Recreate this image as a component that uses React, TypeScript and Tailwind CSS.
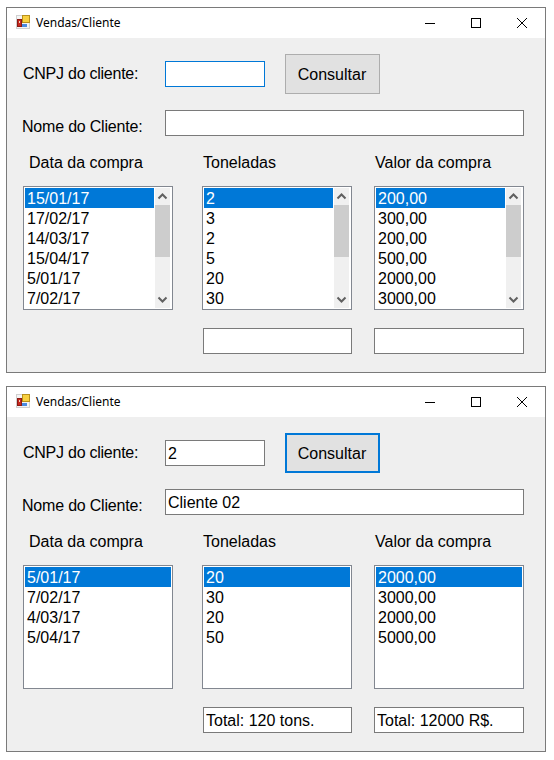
import React from "react";

const AppIcon = () => (
  <svg width="14" height="14" viewBox="0 0 14 14" className="shrink-0 mr-[1px] -translate-y-[1px]">
    <rect x="0" y="0" width="14" height="14" fill="#d0d0d0" />
    <rect x="1" y="1" width="12" height="12" fill="#f4f4f4" />
    <rect x="6.5" y="0.5" width="7" height="7" fill="#f8d040" stroke="#b8901c" />
    <rect x="1.5" y="4.5" width="4" height="7" fill="#c8281e" stroke="#8a1a14" />
    <rect x="3" y="6" width="1" height="2" fill="#f0d0c0" />
    <rect x="6" y="9" width="5" height="3" fill="#4a8ae0" />
  </svg>
);

const TitleBar = () => (
  <div className="h-[30px] bg-white flex items-center pl-[9px] shrink-0">
    <AppIcon />
    <span className="ml-[5px] flex-1 text-[12px] text-black font-['Noto_Sans',sans-serif]">Vendas/Cliente</span>
    <div className="w-[46px] h-[30px] flex items-center justify-center">
      <svg width="10" height="10" viewBox="0 0 10 10"><path d="M0 5.5H10" stroke="#000" strokeWidth="1" /></svg>
    </div>
    <div className="w-[46px] h-[30px] flex items-center justify-center">
      <svg width="10" height="10" viewBox="0 0 10 10"><rect x="0.5" y="0.5" width="9" height="9" fill="none" stroke="#000" /></svg>
    </div>
    <div className="w-[46px] h-[30px] flex items-center justify-center">
      <svg width="10" height="10" viewBox="0 0 10 10"><path d="M0 0L10 10M10 0L0 10" stroke="#000" strokeWidth="1" /></svg>
    </div>
  </div>
);

const Arrow = ({ down }: { down?: boolean }) => (
  <svg width="15" height="17" viewBox="0 0 15 17" className="shrink-0">
    <path d={down ? "M3.5 6.5L7.5 10.5L11.5 6.5" : "M3.5 10.5L7.5 6.5L11.5 10.5"} fill="none" stroke="#606060" strokeWidth="2" />
  </svg>
);

const Scrollbar = () => (
  <div className="w-[15px] h-[120px] bg-[#f0f0f0] flex flex-col shrink-0 mx-[1px]">
    <Arrow />
    <div className="h-[52px] bg-[#cdcdcd] shrink-0" />
    <div className="flex-1" />
    <Arrow down />
  </div>
);

const ListBox = ({ items, scroll }: { items: string[]; scroll: boolean }) => (
  <div className="w-[150px] h-[124px] bg-white border border-[#828790] p-[1px] flex overflow-hidden">
    <div className="flex-1 min-w-0">
      {items.map((it, i) => (
        <div
          key={i}
          className={
            "h-[20px] leading-[22px] pl-[2px] text-[16px] " +
            (i === 0 ? "bg-[#0078d7] text-white" : "text-black")
          }
        >
          {it}
        </div>
      ))}
    </div>
    {scroll && <Scrollbar />}
  </div>
);

const TextBox = ({ value, className }: { value: string; className: string }) => (
  <input
    readOnly
    value={value}
    className={"h-[26px] bg-white border text-[16px] text-black pl-[2px] pt-[1px] outline-none " + className}
  />
);

type Data = {
  cnpj: string;
  nome: string;
  focusInput: boolean;
  scroll: boolean;
  datas: string[];
  tons: string[];
  valores: string[];
  totalT: string;
  totalV: string;
};

const Column = ({
  title,
  titleClass,
  children,
  className,
}: {
  title: string;
  titleClass: string;
  children: React.ReactNode;
  className: string;
}) => (
  <div className={"w-[150px] flex flex-col " + className}>
    <div className={"h-[20px] leading-[20px] text-[16px] text-black mb-[13px] " + titleClass}>{title}</div>
    {children}
  </div>
);

const Win = ({ d, className }: { d: Data; className: string }) => (
  <div className={"w-[540px] h-[366px] ml-[6px] border border-[#7a7a7a] bg-[#efefef] flex flex-col " + className}>
    <TitleBar />
    <div className="flex items-center pl-[16px] mt-[16px]">
      <span className="w-[142px] text-[16px] text-black tracking-[-0.25px]">CNPJ do cliente:</span>
      <TextBox
        value={d.cnpj}
        className={"w-[100px] " + (d.focusInput ? "border-[#0078d7]" : "border-[#7a7a7a]")}
      />
      <button
        className={
          "w-[95px] h-[40px] ml-[20px] bg-[#e1e1e1] text-[16px] text-black pt-[2px] pr-[1px] " +
          (d.focusInput ? "border border-[#adadad]" : "border-2 border-[#0078d7]")
        }
      >
        Consultar
      </button>
    </div>
    <div className="flex items-center pl-[15px] mt-[16px]">
      <span className="w-[143px] text-[16px] text-black translate-y-[4px] tracking-[-0.2px]">Nome do Cliente:</span>
      <TextBox value={d.nome} className="w-[359px] border-[#7a7a7a]" />
    </div>
    <div className="flex mt-[17px] pl-[16px]">
      <Column title="Data da compra" titleClass="pl-[6px]" className="">
        <ListBox items={d.datas} scroll={d.scroll} />
      </Column>
      <Column title="Toneladas" titleClass="pl-[1px]" className="ml-[29px]">
        <ListBox items={d.tons} scroll={d.scroll} />
        <TextBox value={d.totalT} className="w-[149px] ml-[1px] mt-[18px] border-[#7a7a7a]" />
      </Column>
      <Column title="Valor da compra" titleClass="pl-[1px]" className="ml-[22px]">
        <ListBox items={d.valores} scroll={d.scroll} />
        <TextBox value={d.totalV} className="w-[150px] mt-[18px] border-[#7a7a7a]" />
      </Column>
    </div>
  </div>
);

const a: Data = {
  cnpj: "",
  nome: "",
  focusInput: true,
  scroll: true,
  datas: ["15/01/17", "17/02/17", "14/03/17", "15/04/17", "5/01/17", "7/02/17"],
  tons: ["2", "3", "2", "5", "20", "30"],
  valores: ["200,00", "300,00", "200,00", "500,00", "2000,00", "3000,00"],
  totalT: "",
  totalV: "",
};

const b: Data = {
  cnpj: "2",
  nome: "Cliente 02",
  focusInput: false,
  scroll: false,
  datas: ["5/01/17", "7/02/17", "4/03/17", "5/04/17"],
  tons: ["20", "30", "20", "50"],
  valores: ["2000,00", "3000,00", "2000,00", "5000,00"],
  totalT: "Total: 120 tons.",
  totalV: "Total: 12000 R$.",
};

export default function App() {
  return (
    <div className="w-[554px] h-[760px] bg-white overflow-hidden pt-[7px] font-['Liberation_Sans',Arial,sans-serif]">
      <Win d={a} className="" />
      <Win d={b} className="mt-[13px]" />
    </div>
  );
}
